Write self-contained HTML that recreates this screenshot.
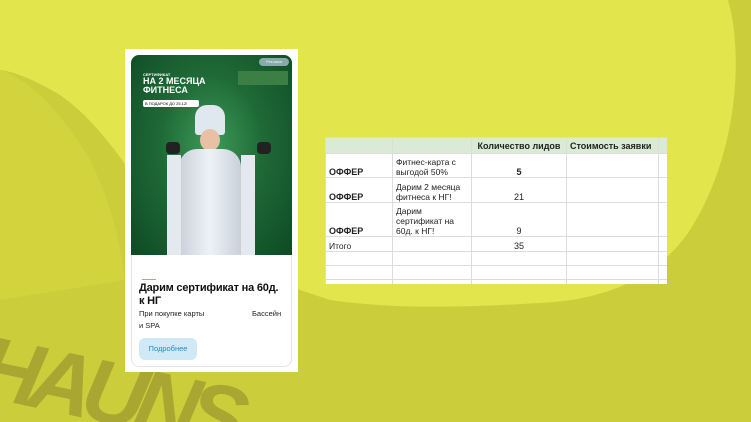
<!DOCTYPE html>
<html><head><meta charset="utf-8"><style>
*{margin:0;padding:0;box-sizing:border-box}
html,body{width:751px;height:422px;overflow:hidden}
body{position:relative;background:#cccd3a;font-family:"Liberation Sans",sans-serif}
.abs{position:absolute}
table{border-collapse:collapse;font-size:9px;color:#222;table-layout:fixed}
td{border:1px solid #dcdcdc;vertical-align:bottom;padding:0 3px;line-height:10px;overflow:hidden}
</style></head><body>
<svg class="abs" style="left:0;top:0;overflow:hidden" width="751" height="422">
<path d="M0 0 L728 0 C745 60 735 160 690 230 C660 275 610 300 540 303 C470 307 400 310 330 300 L300 290 L170 230 C140 190 110 130 60 95 C35 80 15 72 0 70 Z" fill="#e3e54c"/>
<path d="M0 70 C30 80 60 110 90 160 C110 200 120 240 125 280 L0 300 Z" fill="#d4d53f" opacity=".7"/>
<text x="-25" y="425" transform="rotate(12 120 400)" font-family="Liberation Sans" font-weight="bold" font-style="italic" font-size="88" letter-spacing="-10" fill="#a9a631">HAUNS</text>
</svg>
<div class="abs" style="left:125px;top:49px;width:173px;height:323px;background:#fff"></div>
<div class="abs" style="left:131px;top:55px;width:161px;height:312px;border:1px solid #e4e4e4;border-radius:8px;background:#fff"></div>
<div class="abs" style="left:131px;top:55px;width:161px;height:200px;border-radius:8px 8px 0 0;background:radial-gradient(ellipse at 50% 45%,#3f9a5a 0%,#1e6a36 45%,#0f4a24 100%);overflow:hidden">
 <div class="abs" style="left:128px;top:3px;width:30px;height:8px;border-radius:4px;background:#8aa;font-size:4px;color:#eee;text-align:center;line-height:8px">Реклама</div>
 <div class="abs" style="left:107px;top:16px;width:50px;height:14px;background:#3c7f45"></div>
 <div class="abs" style="left:12px;top:17px;font-size:4px;color:#fff;font-weight:bold">СЕРТИФИКАТ</div>
 <div class="abs" style="left:12px;top:22px;font-size:9px;line-height:9px;color:#fff;font-weight:bold">НА 2 МЕСЯЦА<br>ФИТНЕСА</div>
 <div class="abs" style="left:12px;top:45px;width:56px;height:7px;background:#fff;border-radius:2px;font-size:4px;color:#000;line-height:7px;padding-left:2px">В ПОДАРОК ДО 25.12!</div>
 <div class="abs" style="left:64px;top:50px;width:30px;height:30px;border-radius:40% 40% 10% 10%;background:#dfe7ef"></div>
 <div class="abs" style="left:69px;top:74px;width:20px;height:22px;border-radius:50%;background:#e8c0a4"></div>
 <div class="abs" style="left:48px;top:94px;width:62px;height:106px;border-radius:18px 18px 0 0;background:linear-gradient(90deg,#c8d0da,#eef2f6 50%,#c8d0da)"></div>
 <div class="abs" style="left:36px;top:100px;width:14px;height:100px;background:#e4e9ef"></div>
 <div class="abs" style="left:110px;top:100px;width:14px;height:100px;background:#e4e9ef"></div>
 <div class="abs" style="left:35px;top:87px;width:14px;height:12px;border-radius:4px;background:#222"></div>
 <div class="abs" style="left:126px;top:87px;width:14px;height:12px;border-radius:4px;background:#222"></div>
</div>
<div class="abs" style="left:142px;top:279px;width:14px;height:1px;background:#e88"></div>
<div class="abs" style="left:139px;top:282px;font-size:11px;font-weight:bold;color:#111;line-height:13px;letter-spacing:-0.2px">Дарим сертификат на 60д.<br>к НГ</div>
<div class="abs" style="left:139px;top:308px;font-size:7.5px;color:#222;line-height:12px">При покупке карты<br>и SPA</div>
<div class="abs" style="left:252px;top:308px;font-size:7.5px;color:#222;line-height:12px">Бассейн</div>
<div class="abs" style="left:139px;top:338px;width:58px;height:22px;border-radius:6px;background:#cfe9f7;color:#2a8ac4;font-size:7.5px;line-height:22px;text-align:center">Подробнее</div>
<div class="abs" style="left:325px;top:137px;width:342px;height:147px;background:#fff;overflow:hidden">
<table style="width:342px">
<colgroup><col style="width:67px"><col style="width:79px"><col style="width:95px"><col style="width:92px"><col style="width:9px"></colgroup>
<tr style="height:16px;background:#dbead5"><td></td><td></td><td style="font-weight:bold;text-align:center;vertical-align:middle">Количество лидов</td><td style="font-weight:bold;vertical-align:middle">Стоимость заявки</td><td></td></tr>
<tr style="height:24px"><td style="font-weight:bold">ОФФЕР</td><td style="font-size:8.5px">Фитнес-карта с выгодой 50%</td><td style="text-align:center;font-weight:bold">5</td><td></td><td></td></tr>
<tr style="height:25px"><td style="font-weight:bold">ОФФЕР</td><td style="font-size:8.5px">Дарим 2 месяца фитнеса к НГ!</td><td style="text-align:center">21</td><td></td><td></td></tr>
<tr style="height:34px"><td style="font-weight:bold">ОФФЕР</td><td style="font-size:8.5px">Дарим сертификат на 60д. к НГ!</td><td style="text-align:center">9</td><td></td><td></td></tr>
<tr style="height:15px"><td style="font-size:8.5px">Итого</td><td></td><td style="text-align:center">35</td><td></td><td></td></tr>
<tr style="height:14px"><td></td><td></td><td></td><td></td><td></td></tr>
<tr style="height:14px"><td></td><td></td><td></td><td></td><td></td></tr>
<tr style="height:8px"><td></td><td></td><td></td><td></td><td></td></tr>
</table>
</div>
</body></html>
